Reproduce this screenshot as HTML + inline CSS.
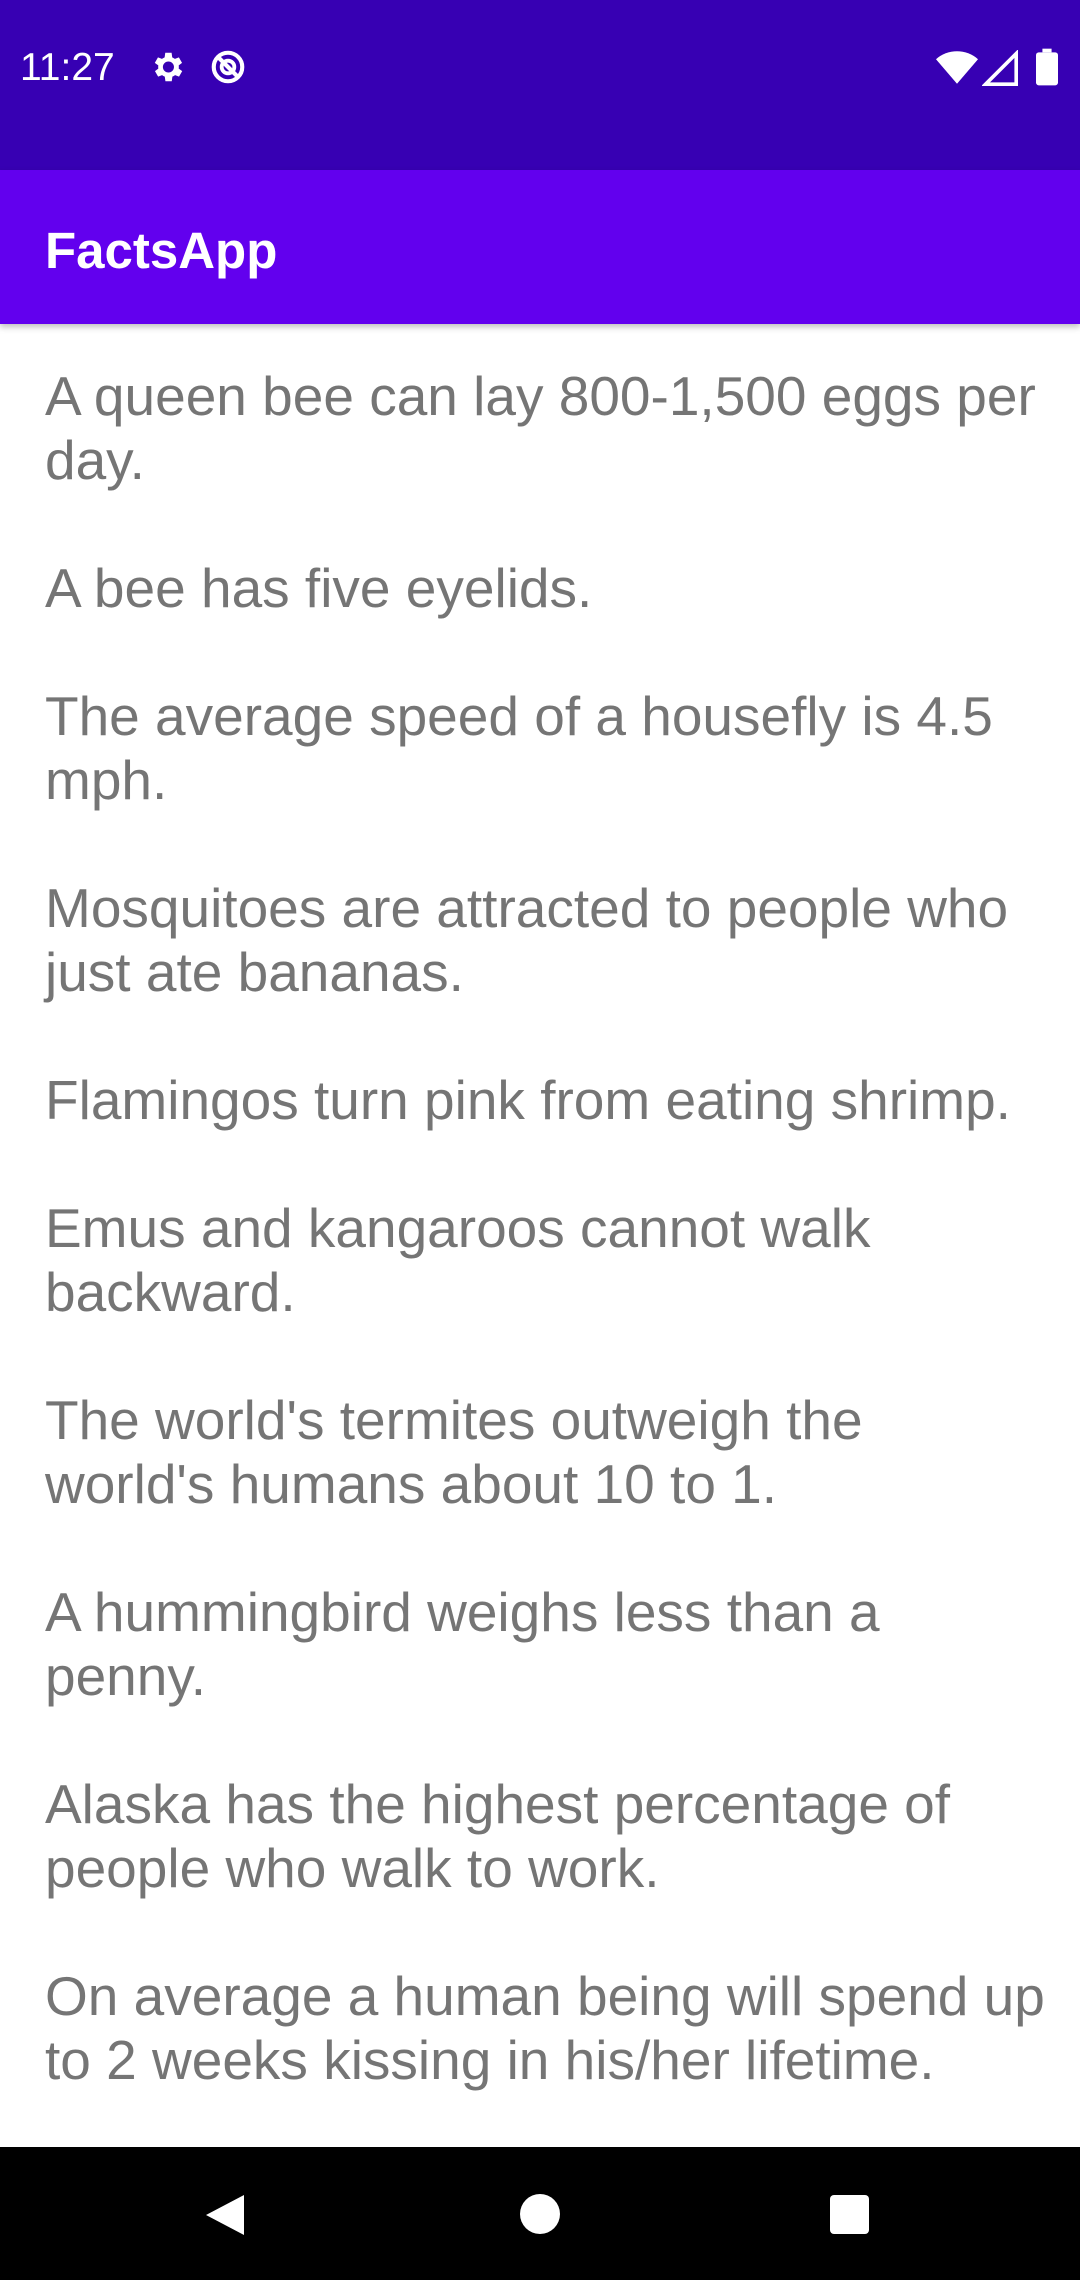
<!DOCTYPE html>
<html><head><meta charset="utf-8"><style>
html,body{margin:0;padding:0;}
body{width:1080px;height:2280px;position:relative;overflow:hidden;background:#fff;font-family:"Liberation Sans",Roboto,sans-serif;}
.sb{position:absolute;left:0;top:0;width:1080px;height:170px;background:#3700B3;color:#fff;}
.time{position:absolute;left:20px;top:46px;font-size:39px;line-height:44px;}
.ab{position:absolute;left:0;top:170px;width:1080px;height:154px;background:#6200EE;box-shadow:0 3px 6px rgba(0,0,0,0.25);}
.title{position:absolute;left:45px;top:51px;font-size:51px;line-height:60px;color:#fff;font-weight:bold;}
.content{position:absolute;left:45px;top:364px;width:1030px;font-size:55px;line-height:64px;color:#757575;white-space:nowrap;}
.nav{position:absolute;left:0;top:2147px;width:1080px;height:133px;background:#000;}
</style></head><body>
<div class="sb">
<div class="time">11:27</div>
<svg style="position:absolute;left:148px;top:48px" width="38" height="38" viewBox="0 0 24 24"><path fill="#fff" d="M19.4 13a7.5 7.5 0 0 0 0-2l2.1-1.6-2-3.5-2.5 1a7 7 0 0 0-1.7-1L14.9 3h-4l-.4 2.9a7 7 0 0 0-1.7 1l-2.5-1-2 3.5L6.5 11a7.5 7.5 0 0 0 0 2l-2.1 1.6 2 3.5 2.5-1a7 7 0 0 0 1.7 1l.4 2.9h4l.4-2.9a7 7 0 0 0 1.7-1l2.5 1 2-3.5zM12.9 15.5a3.5 3.5 0 1 1 0-7 3.5 3.5 0 0 1 0 7z"/></svg>
<svg style="position:absolute;left:209px;top:48px" width="38" height="38" viewBox="0 0 24 24"><circle cx="12" cy="12" r="9" fill="none" stroke="#fff" stroke-width="2.6"/><circle cx="12" cy="12" r="4" fill="none" stroke="#fff" stroke-width="2.4"/><path d="M6 6L18 18" stroke="#fff" stroke-width="2.6"/></svg>
<svg style="position:absolute;left:936px;top:50px" width="42" height="36" viewBox="0 0 24 20"><path fill="#fff" d="M12 19L0 5a18 18 0 0 1 24 0z"/></svg>
<svg style="position:absolute;left:982px;top:50px" width="36" height="36" viewBox="0 0 20 20"><path fill="none" stroke="#fff" stroke-width="2" d="M2 19L19 2V19z"/></svg>
<svg style="position:absolute;left:1036px;top:48px" width="22" height="38" viewBox="0 0 12 20"><rect x="3.5" y="0" width="5" height="2" fill="#fff"/><rect x="0" y="2" width="12" height="18" rx="1.5" fill="#fff"/></svg>
</div>
<div class="ab"><div class="title">FactsApp</div></div>
<div class="content">A queen bee can lay 800-1,500 eggs per<br>day.<br><br>A bee has five eyelids.<br><br>The average speed of a housefly is 4.5<br>mph.<br><br>Mosquitoes are attracted to people who<br>just ate bananas.<br><br>Flamingos turn pink from eating shrimp.<br><br>Emus and kangaroos cannot walk<br>backward.<br><br>The world's termites outweigh the<br>world's humans about 10 to 1.<br><br>A hummingbird weighs less than a<br>penny.<br><br>Alaska has the highest percentage of<br>people who walk to work.<br><br>On average a human being will spend up<br>to 2 weeks kissing in his/her lifetime.</div>
<div class="nav">
<svg style="position:absolute;left:204px;top:46px" width="42" height="44" viewBox="0 0 42 44"><path fill="#fff" d="M40 2V42L2 22z"/></svg>
<div style="position:absolute;left:520px;top:47px;width:40px;height:40px;border-radius:50%;background:#fff"></div>
<div style="position:absolute;left:830px;top:48px;width:39px;height:39px;border-radius:4px;background:#fff"></div>
</div>
</body></html>
